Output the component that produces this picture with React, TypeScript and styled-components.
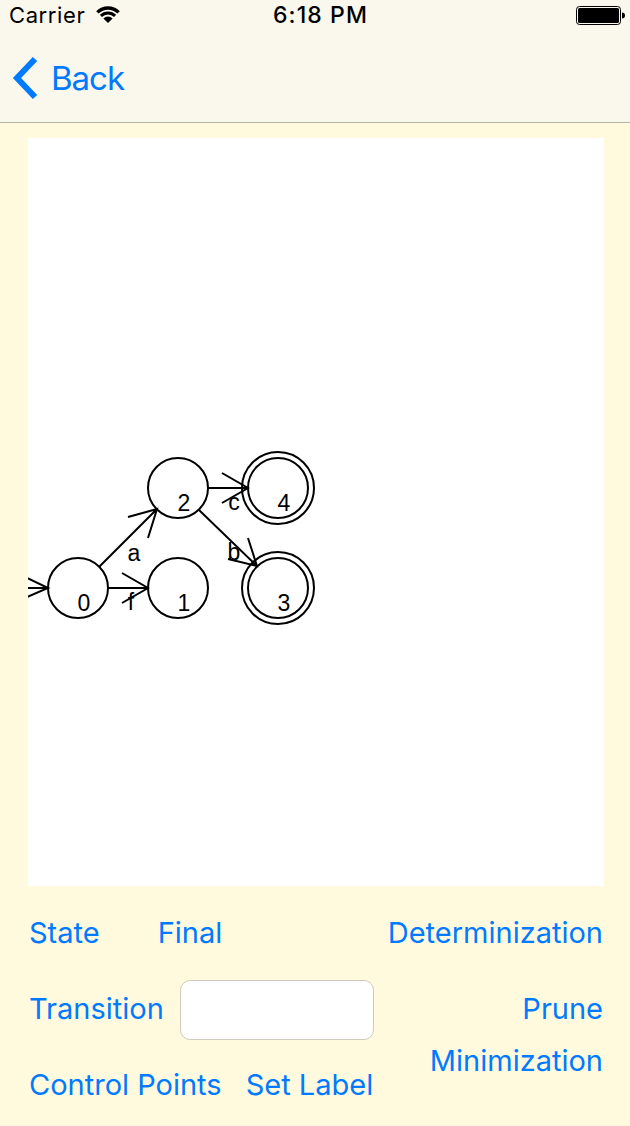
import React from "react";
import styled, { createGlobalStyle } from "styled-components";

const GlobalStyle = createGlobalStyle`
  html, body {
    margin: 0;
    padding: 0;
    background: #fff9dd;
  }
  * {
    box-sizing: border-box;
  }
`;

const Screen = styled.div`
  width: 630px;
  height: 1126px;
  display: flex;
  flex-direction: column;
  background: #fff9dd;
  font-family: Inter, "Liberation Sans", sans-serif;
  overflow: hidden;
`;

const Header = styled.header`
  height: 123px;
  flex: none;
  background: #faf8ec;
  border-bottom: 1px solid #b7b3a2;
`;

const StatusBar = styled.div`
  height: 30px;
  position: relative;
  display: flex;
  align-items: center;
  padding: 0 5px 0 9px;
  color: #000;
`;

const Carrier = styled.span`
  font-size: 22px;
  line-height: 30px;
  letter-spacing: 0.6px;
  margin-right: 11px;
`;

const WifiIcon = styled.svg`
  margin-top: -2px;
`;

const Time = styled.span`
  position: absolute;
  left: 273px;
  top: 0;
  font-size: 23px;
  line-height: 30px;
  font-weight: 500;
  letter-spacing: 1.1px;
`;

const Battery = styled.svg`
  margin-left: auto;
`;

const NavBar = styled.nav`
  height: 92px;
  display: flex;
  align-items: center;
  padding: 4px 0 0 12px;
  gap: 12px;
`;

const BackLabel = styled.span`
  color: #007aff;
  font-size: 33px;
  line-height: 40px;
  letter-spacing: -1px;
`;

const CanvasArea = styled.main`
  flex: none;
  padding: 15px 26px 0 28px;
`;

const Canvas = styled.div`
  width: 576px;
  height: 748px;
  background: #fff;
`;

const Diagram = styled.svg`
  display: block;
  font-family: "Liberation Sans", Arial, sans-serif;
  font-size: 23px;
`;

const Controls = styled.section`
  flex: 1;
  display: flex;
  justify-content: space-between;
  padding: 17px 27px 0 29px;
`;

const LeftColumn = styled.div`
  display: flex;
  flex-direction: column;
  gap: 16px;
`;

const ControlRow = styled.div<{ $gap: number }>`
  height: 60px;
  display: flex;
  align-items: center;
  gap: ${({ $gap }) => $gap}px;
`;

const RightColumn = styled.div`
  display: flex;
  flex-direction: column;
  align-items: flex-end;
`;

const RightAction = styled.div<{ $height: number }>`
  height: ${({ $height }) => $height}px;
  display: flex;
  align-items: center;
`;

const ActionButton = styled.button`
  border: 0;
  padding: 0;
  background: none;
  color: #007aff;
  font-family: inherit;
  font-size: 29px;
  line-height: 36px;
  white-space: nowrap;
`;

const LabelInput = styled.input`
  width: 194px;
  height: 60px;
  margin-top: 2px;
  border: 1px solid #cfcabb;
  border-radius: 10px;
  background: #fff;
  outline: none;
`;

type Point = [number, number];

const states = [
  { id: 0, x: 50, y: 450, final: false },
  { id: 1, x: 150, y: 450, final: false },
  { id: 2, x: 150, y: 350, final: false },
  { id: 3, x: 250, y: 450, final: true },
  { id: 4, x: 250, y: 350, final: true },
];

const arrows: { from: Point; to: Point; a: Point; b: Point }[] = [
  { from: [0, 450], to: [20, 450], a: [-1, 440], b: [-1, 459] },
  { from: [80, 450], to: [120, 450], a: [94, 435], b: [94, 465] },
  { from: [180, 350], to: [220, 350], a: [194, 335], b: [194, 365] },
  { from: [71, 429], to: [129, 371], a: [100, 379], b: [120, 400] },
  { from: [171, 372], to: [229, 428], a: [220, 400], b: [200, 421] },
];

const edgeLabels = [
  { text: "a", x: 106, y: 423 },
  { text: "f", x: 103, y: 472 },
  { text: "b", x: 206, y: 422 },
  { text: "c", x: 206, y: 372 },
];

const AutomatonDiagram: React.FC = () => (
  <Diagram width="576" height="748" viewBox="0 0 576 748">
    {states.map((s) => (
      <g key={s.id} fill="none" stroke="#000" strokeWidth="2">
        <circle cx={s.x} cy={s.y} r="30" />
        {s.final && <circle cx={s.x} cy={s.y} r="36" />}
      </g>
    ))}
    {arrows.map((arrow, i) => (
      <path
        key={i}
        fill="none"
        stroke="#000"
        strokeWidth="2"
        d={`M${arrow.from.join(" ")}L${arrow.to.join(" ")}M${arrow.a.join(" ")}L${arrow.to.join(" ")}L${arrow.b.join(" ")}`}
      />
    ))}
    {states.map((s) => (
      <text key={s.id} x={s.x + 6} y={s.y + 23} textAnchor="middle">
        {s.id}
      </text>
    ))}
    {edgeLabels.map((l) => (
      <text key={l.text} x={l.x} y={l.y} textAnchor="middle">
        {l.text}
      </text>
    ))}
  </Diagram>
);

const App: React.FC = () => (
  <Screen>
    <GlobalStyle />
    <Header>
      <StatusBar>
        <Carrier>Carrier</Carrier>
        <WifiIcon width="24" height="18" viewBox="0 0 24 18">
          <path fill="none" stroke="#000" strokeWidth="3.4" d="M1.400 7.400a15 15 0 0 1 21.200 0" />
          <path fill="none" stroke="#000" strokeWidth="3" d="M4.900 10.900a10 10 0 0 1 14.200 0" />
          <path fill="#000" d="M12 18l-4.600-4.600a6.500 6.500 0 0 1 9.200 0z" />
        </WifiIcon>
        <Time>6:18 PM</Time>
        <Battery width="49" height="19" viewBox="0 0 49 19">
          <rect x="0.500" y="0.500" width="44" height="18" rx="3" fill="#faf8ec" stroke="#000" />
          <rect x="2" y="2" width="41" height="15" rx="1.500" fill="#000" />
          <path d="M46 6.500c2 0 3 1 3 3s-1 3-3 3z" fill="#000" />
        </Battery>
      </StatusBar>
      <NavBar>
        <svg width="27" height="44" viewBox="0 0 27 44">
          <path d="M23 3L5 22l18 19" fill="none" stroke="#007aff" strokeWidth="6" />
        </svg>
        <BackLabel>Back</BackLabel>
      </NavBar>
    </Header>
    <CanvasArea>
      <Canvas>
        <AutomatonDiagram />
      </Canvas>
    </CanvasArea>
    <Controls>
      <LeftColumn>
        <ControlRow $gap={58}>
          <ActionButton>State</ActionButton>
          <ActionButton>Final</ActionButton>
        </ControlRow>
        <ControlRow $gap={16}>
          <ActionButton>Transition</ActionButton>
          <LabelInput aria-label="Label" />
        </ControlRow>
        <ControlRow $gap={24}>
          <ActionButton>Control Points</ActionButton>
          <ActionButton>Set Label</ActionButton>
        </ControlRow>
      </LeftColumn>
      <RightColumn>
        <RightAction $height={60}>
          <ActionButton>Determinization</ActionButton>
        </RightAction>
        <RightAction $height={92}>
          <ActionButton>Prune</ActionButton>
        </RightAction>
        <RightAction $height={12}>
          <ActionButton>Minimization</ActionButton>
        </RightAction>
      </RightColumn>
    </Controls>
  </Screen>
);

export default App;
